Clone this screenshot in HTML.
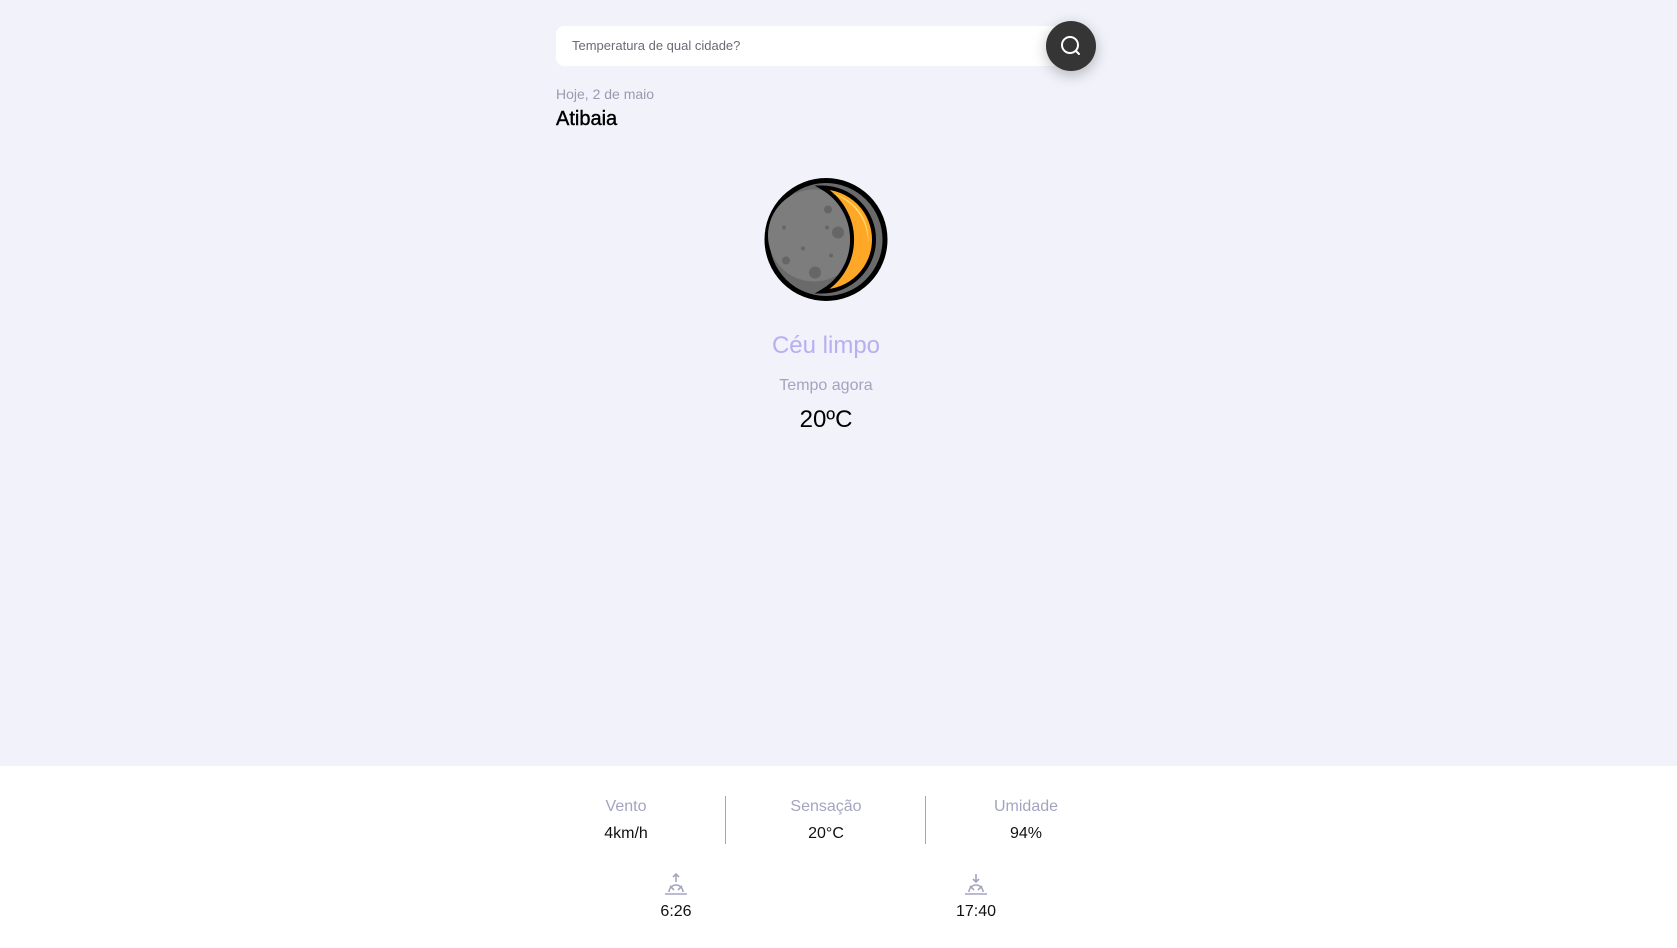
<!DOCTYPE html>
<html><head><meta charset="utf-8"><style>
*{margin:0;padding:0;box-sizing:border-box}
body{width:1677px;height:948px;background:#f1f2fa;font-family:"Liberation Sans",sans-serif;position:relative;overflow:hidden}
.abs{position:absolute}
.search{left:556px;top:26px;width:510px;height:40px;background:#fff;border-radius:8px}
.search span{position:absolute;left:16px;top:12px;font-size:13px;color:#6b6b78}
.btn{left:1046px;top:21px;width:50px;height:50px;border-radius:50%;background:#353535;box-shadow:0 4px 14px rgba(0,0,0,.25)}
.c{text-align:center;transform:translateX(-50%)}
.bottom{left:0;top:766px;width:1677px;height:182px;background:#fff}
.lab{font-size:16px;color:#a4a4c0}
.val{font-size:16px;color:#111}
.div{width:1px;height:48px;background:#a4a4c0;top:796px}
</style></head><body>
<div class="abs search"><span>Temperatura de qual cidade?</span></div>
<div class="abs btn"><svg width="50" height="50" viewBox="0 0 50 50"><circle cx="24" cy="24" r="8" fill="none" stroke="#fff" stroke-width="2"/><line x1="30" y1="30" x2="33" y2="33" stroke="#fff" stroke-width="2" stroke-linecap="round"/></svg></div>
<div class="abs" style="left:556px;top:86px;font-size:14px;color:#9a9ab0">Hoje, 2 de maio</div>
<div class="abs" style="left:556px;top:108px;font-size:20px;color:#000;-webkit-text-stroke:0.4px #000">Atibaia</div>
<svg class="abs" style="left:764px;top:177px" width="124" height="125" viewBox="0 0 124 124">
<circle cx="62" cy="62" r="59" fill="#6a6a6a" stroke="#000" stroke-width="5"/>
<circle cx="50" cy="58" r="46" fill="#7d7d7d"/>
<path d="M58 10 A52 52 0 0 1 58 114 A60 60 0 0 0 58 10Z" fill="#ffa726" stroke="#000" stroke-width="4"/>
<path d="M68 16 A46 46 0 0 1 104 66 A52 52 0 0 0 68 16Z" fill="#ffd96a"/>
<circle cx="64" cy="32" r="4" fill="#666"/><circle cx="74" cy="55" r="6" fill="#666"/><circle cx="20" cy="50" r="2" fill="#666"/><circle cx="39" cy="71" r="2" fill="#666"/><circle cx="22" cy="83" r="4" fill="#666"/><circle cx="51" cy="95" r="6" fill="#666"/><circle cx="63" cy="50" r="2" fill="#666"/><circle cx="67" cy="78" r="2" fill="#666"/>
</svg>
<div class="abs c" style="left:826px;top:332px;font-size:24px;color:#b8aef0">Céu limpo</div>
<div class="abs c" style="left:826px;top:377px;font-size:16px;color:#a4a4c0">Tempo agora</div>
<div class="abs c" style="left:826px;top:406px;font-size:24px;color:#000">20ºC</div>
<div class="abs bottom"></div>
<div class="abs c lab" style="left:626px;top:798px">Vento</div>
<div class="abs c val" style="left:626px;top:825px">4km/h</div>
<div class="abs div" style="left:725px"></div>
<div class="abs c lab" style="left:826px;top:798px">Sensação</div>
<div class="abs c val" style="left:826px;top:825px">20°C</div>
<div class="abs div" style="left:925px"></div>
<div class="abs c lab" style="left:1026px;top:798px">Umidade</div>
<div class="abs c val" style="left:1026px;top:825px">94%</div>
<svg class="abs" style="left:664px;top:872px" width="24" height="24" viewBox="0 0 24 24" stroke="#a4a4c0" stroke-width="1.6" fill="none"><line x1="12" y1="2" x2="12" y2="10"/><path d="M9 5l3-3 3 3"/><path d="M5 20a7 7 0 0 1 14 0"/><line x1="1" y1="22" x2="23" y2="22"/><line x1="6" y1="14" x2="10" y2="18"/><line x1="18" y1="14" x2="14" y2="18"/></svg>
<div class="abs c val" style="left:676px;top:903px">6:26</div>
<svg class="abs" style="left:964px;top:872px" width="24" height="24" viewBox="0 0 24 24" stroke="#a4a4c0" stroke-width="1.6" fill="none"><line x1="12" y1="2" x2="12" y2="10"/><path d="M9 7l3 3 3-3"/><path d="M5 20a7 7 0 0 1 14 0"/><line x1="1" y1="22" x2="23" y2="22"/><line x1="6" y1="14" x2="10" y2="18"/><line x1="18" y1="14" x2="14" y2="18"/></svg>
<div class="abs c val" style="left:976px;top:903px">17:40</div>
</body></html>
